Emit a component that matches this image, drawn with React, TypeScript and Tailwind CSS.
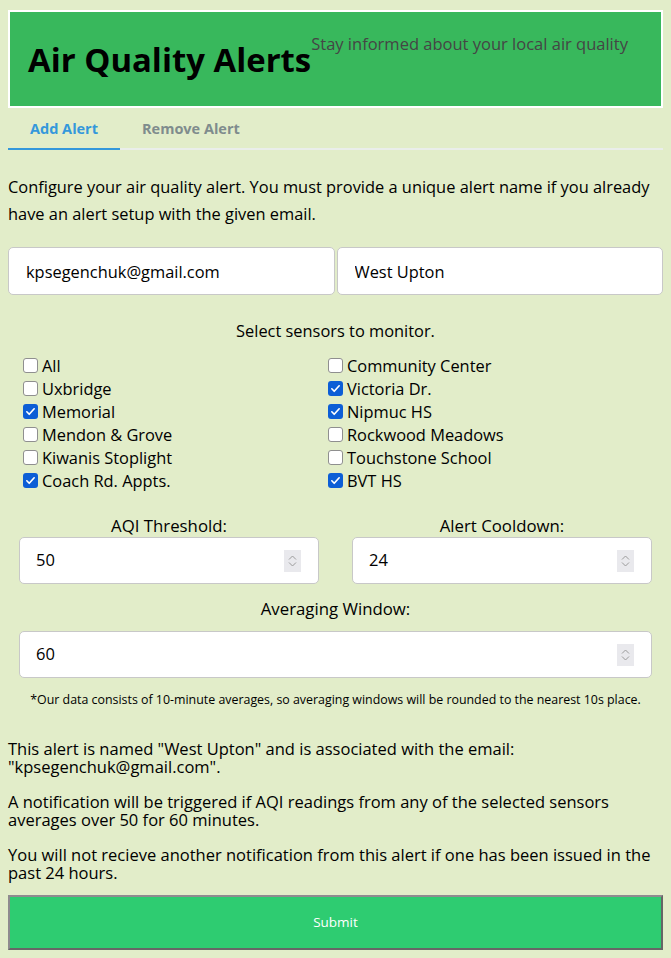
import React from 'react';

const sensors: { name: string; checked: boolean }[] = [
  { name: 'All', checked: false },
  { name: 'Community Center', checked: false },
  { name: 'Uxbridge', checked: false },
  { name: 'Victoria Dr.', checked: true },
  { name: 'Memorial', checked: true },
  { name: 'Nipmuc HS', checked: true },
  { name: 'Mendon & Grove', checked: false },
  { name: 'Rockwood Meadows', checked: false },
  { name: 'Kiwanis Stoplight', checked: false },
  { name: 'Touchstone School', checked: false },
  { name: 'Coach Rd. Appts.', checked: true },
  { name: 'BVT HS', checked: true },
];

const Checkbox: React.FC<{ checked: boolean }> = ({ checked }) =>
  checked ? (
    <span className="flex h-[15px] w-[15px] items-center justify-center rounded-[3px] bg-[#0c5ed6]">
      <svg width="11" height="11" viewBox="0 0 12 12" fill="none">
        <path d="M2 6.3l2.6 2.7L10 3" stroke="white" strokeWidth="1.8" strokeLinecap="round" strokeLinejoin="round" />
      </svg>
    </span>
  ) : (
    <span className="h-[15px] w-[15px] rounded-[3px] border border-[#8f8f8f] bg-white" />
  );

const NumberField: React.FC<{ label: string; value: string; gap: string }> = ({ label, value, gap }) => (
  <div className="flex flex-col">
    <label className={`text-center text-[16.8px] leading-[22px] ${gap}`}>{label}</label>
    <div className="flex h-[47px] items-center rounded-[5px] border border-[#c8c8c8] bg-white pl-[16px] pr-[17px]">
      <input readOnly value={value} className="min-w-0 flex-1 bg-transparent text-[16.5px] outline-none" />
      <span className="flex h-[22px] w-[17px] flex-col items-center justify-center gap-[2px] bg-[#e9e9ed]">
        <svg width="9" height="5" viewBox="0 0 9 5" fill="none">
          <path d="M1 4.5L4.5 1L8 4.5" stroke="#9a9a9a" strokeWidth="1" />
        </svg>
        <svg width="9" height="5" viewBox="0 0 9 5" fill="none">
          <path d="M1 0.5L4.5 4L8 0.5" stroke="#9a9a9a" strokeWidth="1" />
        </svg>
      </span>
    </div>
  </div>
);

export default function App() {
  return (
    <div className="min-h-screen bg-[#e2edc9] px-2 pt-[10px] pb-2 font-['Open_Sans',sans-serif] text-black">
      <header className="flex h-[98px] items-start border-2 border-white bg-[#38b85c] pl-[18px]">
        <h1 className="mt-[28px] text-[32.9px] leading-[40px] font-bold">Air Quality Alerts</h1>
        <p className="mt-[20px] text-[16.5px] leading-[24px] text-[#454545]">Stay informed about your local air quality</p>
      </header>

      <nav className="flex border-b-2 border-[#eaeeea]">
        <button className="-mb-[2px] border-b-2 border-[#3498db] px-[22px] pt-[11px] pb-[9px] text-[14.5px] leading-[20px] font-bold text-[#3498db]">
          Add Alert
        </button>
        <button className="px-[22px] pt-[11px] pb-[9px] text-[14.5px] leading-[20px] font-bold text-[#7f8c8d]">
          Remove Alert
        </button>
      </nav>

      <p className="mt-[23px] text-[16.4px] leading-[27px]">
        Configure your air quality alert. You must provide a unique alert name if you already have an alert setup with the given email.
      </p>

      <div className="mt-[20px] grid grid-cols-2 gap-[2px]">
        <input readOnly value="kpsegenchuk@gmail.com" className="h-[48px] rounded-[5px] border border-[#c8c8c8] bg-white px-[17px] text-[16.4px] outline-none" />
        <input readOnly value="West Upton" className="h-[48px] rounded-[5px] border border-[#c8c8c8] bg-white px-[17px] text-[16.4px] outline-none" />
      </div>

      <p className="mt-[26px] text-center text-[16.4px] leading-[20px]">Select sensors to monitor.</p>

      <div className="mt-[13px] grid grid-cols-[305px_305px] pl-[15px]">
        {sensors.map(s => (
          <label key={s.name} className="flex h-[23px] items-center gap-[4px] text-[16.4px] leading-[23px]">
            <Checkbox checked={s.checked} />
            {s.name}
          </label>
        ))}
      </div>

      <div className="mt-[23px] grid grid-cols-2 gap-[33px] px-[11px]">
        <NumberField label="AQI Threshold:" value="50" gap="" />
        <NumberField label="Alert Cooldown:" value="24" gap="" />
      </div>

      <div className="mt-[14px] px-[11px]">
        <NumberField label="Averaging Window:" value="60" gap="mb-[11px]" />
      </div>

      <p className="mt-[14px] text-center text-[12.4px] leading-[16px]">
        *Our data consists of 10-minute averages, so averaging windows will be rounded to the nearest 10s place.
      </p>

      <div className="mt-[32px] flex flex-col gap-[17px] text-[16.5px] leading-[18px]">
        <p>This alert is named "West Upton" and is associated with the email: "kpsegenchuk@gmail.com".</p>
        <p>A notification will be triggered if AQI readings from any of the selected sensors averages over 50 for 60 minutes.</p>
        <p>You will not recieve another notification from this alert if one has been issued in the past 24 hours.</p>
      </div>

      <button className="mt-[13px] h-[55px] w-full border-2 border-t-[#8f8b8f] border-l-[#8f8b8f] border-b-[#666] border-r-[#666] bg-[#2ecc71] text-[13.5px] text-white">
        Submit
      </button>
    </div>
  );
}
